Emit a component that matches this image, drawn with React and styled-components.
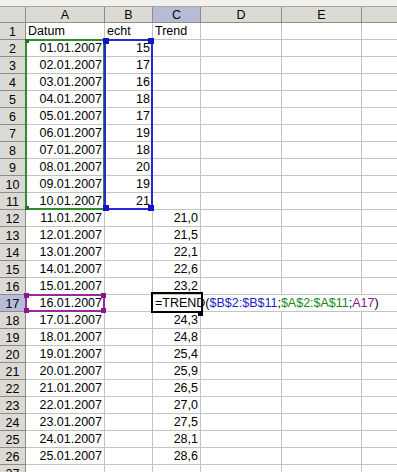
import React from 'react';
import styled, { createGlobalStyle } from 'styled-components';

const GlobalStyle = createGlobalStyle`
  body {
    margin: 0;
    background: #fff;
    overflow: hidden;
  }
`;

const COLS = ['A', 'B', 'C', 'D', 'E', ''];
const ACTIVE_COL = 'C';
const ACTIVE_ROW = 17;

const echt = [15, 17, 16, 18, 17, 19, 18, 20, 19, 21];
const trend = ['21,0', '21,5', '22,1', '22,6', '23,2', null, '24,3', '24,8', '25,4', '25,9', '26,5', '27,0', '27,5', '28,1', '28,6'];

const pad = (n) => (n < 10 ? '0' + n : '' + n);

const buildRows = () => {
  const rows = [{ n: 1, a: 'Datum', b: 'echt', c: 'Trend', header: true }];
  for (let i = 1; i <= 25; i++) {
    rows.push({
      n: i + 1,
      a: `${pad(i)}.01.2007`,
      b: i <= 10 ? echt[i - 1] : '',
      c: i >= 11 ? trend[i - 11] : '',
    });
  }
  rows.push({ n: 27, a: '', b: '', c: '' });
  return rows;
};

const Sheet = styled.div`
  width: 397px;
  height: 472px;
  overflow: hidden;
  font-family: 'Liberation Sans', Arial, sans-serif;
  font-size: 12.5px;
  color: #000;
`;

const TopStrip = styled.div`
  height: 6px;
  background: #f1f0ea;
  border-bottom: 1px solid #a7a6a0;
`;

const Grid = styled.div`
  position: relative;
  display: grid;
  grid-template-columns: 26px 79px 48px 48px 81px 80px 40px;
  grid-template-rows: 16px;
  grid-auto-rows: 17px;
`;

const HeadCell = styled.div`
  box-sizing: border-box;
  display: flex;
  align-items: center;
  justify-content: center;
  background: ${(p) => (p.$active ? '#b7bcd6' : '#dcdad4')};
  border-right: 1px solid #8e8c86;
  border-bottom: 1px solid #8e8c86;
  line-height: 14px;
  padding-top: 1px;
`;

const Cell = styled.div`
  box-sizing: border-box;
  display: flex;
  align-items: flex-end;
  justify-content: ${(p) => (p.$right ? 'flex-end' : 'flex-start')};
  padding: 0 2px 1px 2px;
  border-right: 1px solid #c4c4c4;
  border-bottom: 1px solid #c4c4c4;
  line-height: 13px;
  white-space: nowrap;
  overflow: hidden;
  background: #fff;
`;

const FormulaCell = styled(Cell)`
  position: relative;
  z-index: 2;
  overflow: visible;
`;

const Editor = styled.span`
  position: absolute;
  left: 0;
  top: 0;
  height: 16px;
  width: 233px;
  background: #fff;
  padding-left: 2px;
  display: flex;
  align-items: flex-end;
  padding-bottom: 1px;
  box-sizing: border-box;
  line-height: 13px;
`;

const Ref = styled.span`
  color: ${(p) => p.$c};
`;

const Range = styled.div`
  position: absolute;
  z-index: 3;
  box-sizing: border-box;
  left: ${(p) => p.$x}px;
  top: ${(p) => p.$y}px;
  width: ${(p) => p.$w}px;
  height: ${(p) => p.$h}px;
  border: ${(p) => p.$bw || 2}px solid ${(p) => p.$c};
  pointer-events: none;
`;

const Handle = styled.div`
  position: absolute;
  width: ${(p) => p.$s}px;
  height: ${(p) => p.$s}px;
  background: ${(p) => p.$c};
  ${(p) => (p.$top ? 'top' : 'bottom')}: ${(p) => -Math.ceil(p.$s / 2)}px;
  ${(p) => (p.$left ? 'left' : 'right')}: ${(p) => -Math.ceil(p.$s / 2)}px;
`;

const FillHandle = styled.div`
  position: absolute;
  z-index: 4;
  left: 198px;
  top: 305px;
  width: 5px;
  height: 4px;
  background: #000;
`;

const corners = (c, s, which) =>
  which.map(([top, left]) => (
    <Handle key={`${top}${left}`} $c={c} $s={s} $top={top} $left={left} />
  ));

export default function App() {
  const rows = buildRows();

  return (
    <Sheet>
      <GlobalStyle />
      <TopStrip />
      <Grid>
        <HeadCell />
        {COLS.map((c, i) => (
          <HeadCell key={i} $active={c === ACTIVE_COL}>{c}</HeadCell>
        ))}

        {rows.map((r) => (
          <React.Fragment key={r.n}>
            <HeadCell $active={r.n === ACTIVE_ROW}>{r.n}</HeadCell>
            <Cell $right={!r.header}>{r.a}</Cell>
            <Cell $right={!r.header}>{r.b}</Cell>
            {r.n === ACTIVE_ROW ? (
              <FormulaCell>
                <Editor>
                  =TREND(<Ref $c="#1c1cc8">$B$2:$B$11</Ref>;
                  <Ref $c="#138a13">$A$2:$A$11</Ref>;
                  <Ref $c="#8a168a">A17</Ref>)
                </Editor>
              </FormulaCell>
            ) : (
              <Cell $right={!r.header}>{r.c}</Cell>
            )}
            <Cell />
            <Cell />
            <Cell />
          </React.Fragment>
        ))}

        <Range $x={25} $y={32} $w={80} $h={171} $c="#2e8b2e">
          {corners('#2e6b2e', 4, [[true, true], [false, true]])}
        </Range>
        <Range $x={104} $y={32} $w={49} $h={171} $c="#2828d8">
          {corners('#1414c8', 6, [[true, true], [true, false], [false, true], [false, false]])}
        </Range>
        <Range $x={25} $y={287} $w={80} $h={18} $c="#9a2a9a">
          {corners('#8a168a', 5, [[true, true], [true, false], [false, true], [false, false]])}
        </Range>
        <Range $x={151} $y={285} $w={52} $h={21} $c="#000" />
        <FillHandle />
      </Grid>
    </Sheet>
  );
}
